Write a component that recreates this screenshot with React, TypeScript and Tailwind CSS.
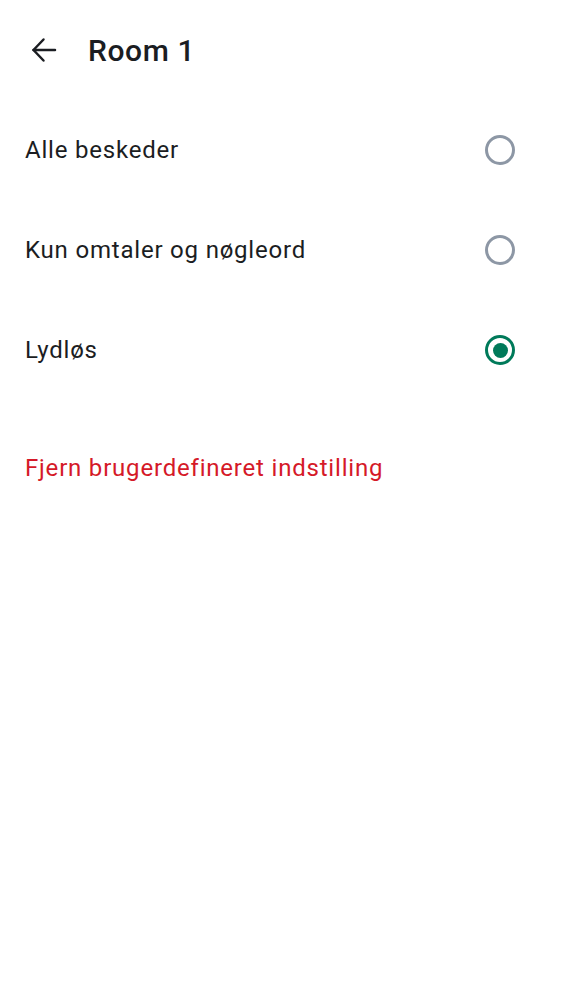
import React, { useState } from 'react';

const options = ['Alle beskeder', 'Kun omtaler og nøgleord', 'Lydløs'];

function Radio({ checked }: { checked: boolean }) {
  return (
    <div
      className={`w-[30px] h-[30px] rounded-full border-[3px] flex items-center justify-center ${
        checked ? 'border-[#007a5a]' : 'border-[#8d97a5]'
      }`}
    >
      {checked && <div className="w-[15px] h-[15px] rounded-full bg-[#007a5a]"></div>}
    </div>
  );
}

export default function App() {
  const [selected, setSelected] = useState(2);

  return (
    <div className="min-h-screen bg-white text-[#1b1d22] font-['Roboto',sans-serif]">
      {/* Header */}
      <div className="h-[100px] flex items-center pl-[31px]">
        <svg width="26" height="26" viewBox="0 0 26 26" fill="none" stroke="#1b1d22" strokeWidth="2.5" strokeLinecap="round" strokeLinejoin="round">
          <path d="M24 13H2.5" />
          <path d="M12.5 2.5L2.5 13l10 10.5" />
        </svg>
        <h1 className="ml-[31px] text-[30px] font-medium tracking-[0.6px]">Room 1</h1>
      </div>

      {/* Options */}
      <div className="flex flex-col">
        {options.map((label, i) => (
          <button
            key={label}
            onClick={() => setSelected(i)}
            className="h-[100px] flex items-center justify-between pl-[25px] pr-[47px] text-left"
          >
            <span className="text-[24px] tracking-[0.8px]">{label}</span>
            <Radio checked={selected === i} />
          </button>
        ))}
      </div>

      <button className="mt-[50px] pl-[25px] h-[36px] text-[24px] text-[#d51928] tracking-[0.8px]">
        Fjern brugerdefineret indstilling
      </button>
    </div>
  );
}
